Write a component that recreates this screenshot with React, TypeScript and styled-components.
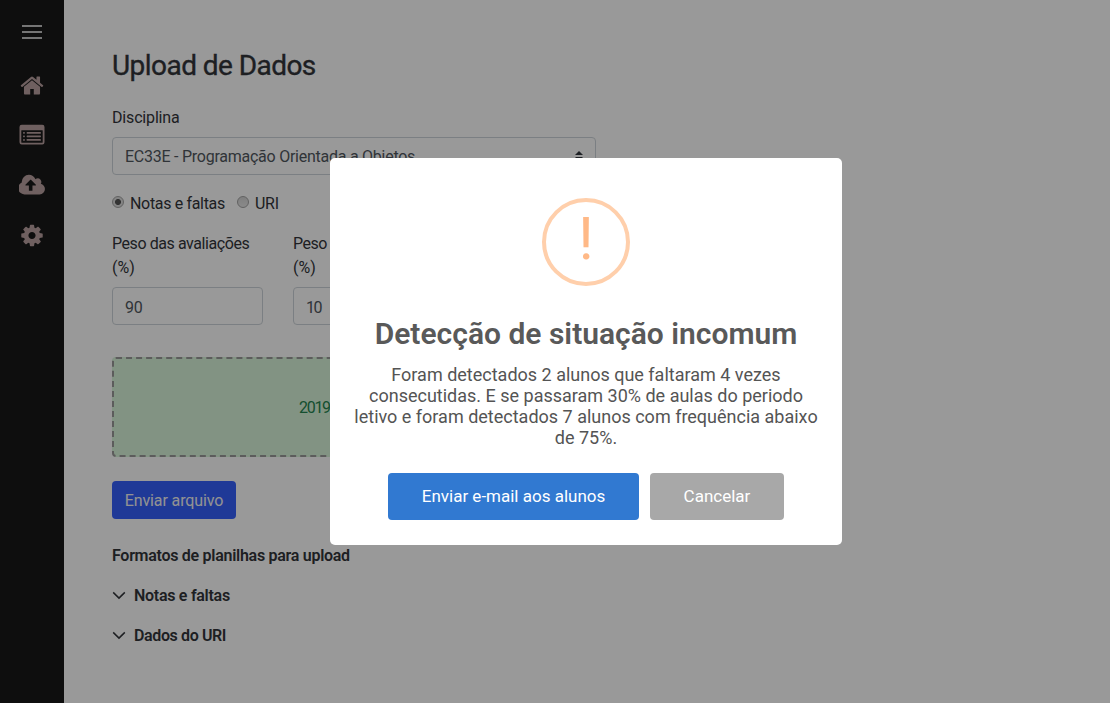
import React from "react";
import styled, { createGlobalStyle } from "styled-components";

const Global = createGlobalStyle`
  *, *::before, *::after { box-sizing: border-box; }
  html, body { margin: 0; padding: 0; overflow: hidden; }
  body { background: #fff; font-family: Roboto, "Liberation Sans", sans-serif; font-size: 16px; line-height: 24px; color: #32353a; }
`;

const Page = styled.div`
  display: flex;
  height: 703px;
  width: 1110px;
`;

const Sidebar = styled.nav`
  width: 64px;
  flex: none;
  background: #181818;
  color: #b9a0a0;
  display: flex;
  flex-direction: column;
  align-items: center;
  padding-top: 24px;
`;

const MenuButton = styled.div`
  width: 20px;
  height: 14px;
  margin: 1px 0 21px;
  display: flex;
  flex-direction: column;
  justify-content: space-between;
`;

const MenuBar = styled.span`
  height: 2px;
  background: #c4c4c4;
`;

const NavItem = styled.a`
  height: 50px;
  display: flex;
  align-items: center;
  justify-content: center;
`;

const Glyph = styled.svg`
  display: block;
  height: 25px;
  width: 26px;
  fill: currentColor;
`;

const Main = styled.main`
  padding: 49px 48px 0;
  width: 580px;
`;

const Title = styled.h1`
  margin: 0 0 23px;
  font-size: 28px;
  font-weight: 400;
  line-height: 34px;
  letter-spacing: -0.55px;
  -webkit-text-stroke: 0.35px currentColor;
`;

const Label = styled.label<{ $ls?: number }>`
  display: block;
  height: 24px;
  white-space: nowrap;
  letter-spacing: ${(p) => p.$ls ?? 0}px;
`;

const Control = styled.div<{ $w?: number; $ls?: number; $drop?: number }>`
  width: ${(p) => (p.$w ? `${p.$w}px` : "100%")};
  height: 38px;
  padding: ${(p) => p.$drop ?? 2}px 12px 0;
  border: 1px solid #ced4da;
  border-radius: 4px;
  display: flex;
  align-items: center;
  justify-content: space-between;
  color: #50575e;
  white-space: nowrap;
  letter-spacing: ${(p) => p.$ls ?? 0}px;
`;

const SelectArrows = styled.svg`
  width: 8px;
  height: 10px;
  margin-bottom: 2px;
  fill: #343a40;
`;

const Field = styled.div`
  display: flex;
  flex-direction: column;
  gap: 7px;
`;

const RadioRow = styled.div`
  display: flex;
  margin-top: 17px;
  gap: 12px;
`;

const RadioLabel = styled.label<{ $ls?: number }>`
  display: flex;
  align-items: center;
  gap: 6px;
  white-space: nowrap;
  letter-spacing: ${(p) => p.$ls ?? 0}px;
`;

const Radio = styled.span<{ $on?: boolean }>`
  width: 12px;
  height: 12px;
  margin-bottom: 4px;
  border-radius: 50%;
  border: 1px solid #a3a3a3;
  background: ${(p) =>
    p.$on ? "radial-gradient(circle, #555 0 2.6px, #dcdcdc 3.4px)" : "linear-gradient(#d4d4d4, #e6e6e6)"};
`;

const Weights = styled.div`
  display: flex;
  gap: 30px;
  margin-top: 16px;
`;

const DropZone = styled.div`
  margin-top: 32px;
  height: 100px;
  border: 2px dashed #9a9a9a;
  border-radius: 4px;
  background: #d9f5da;
  color: #23844f;
  display: flex;
  align-items: center;
  padding: 2px 0 0 185px;
  letter-spacing: -1.3px;
`;

const SubmitButton = styled.button`
  display: block;
  margin: 24px 0;
  width: 124px;
  height: 38px;
  padding: 2px 0 0;
  border: 0;
  border-radius: 4px;
  background: #3460fc;
  color: #f4f4f4;
  font: 16px/24px Roboto, sans-serif;
  white-space: nowrap;
  letter-spacing: -0.12px;
`;

const SectionTitle = styled.div<{ $ls?: number }>`
  height: 24px;
  margin-bottom: 16px;
  font-weight: 600;
  display: flex;
  align-items: center;
  gap: 8px;
  white-space: nowrap;
  letter-spacing: ${(p) => p.$ls ?? 0}px;
`;

const Sections = styled.div`
  padding-top: 1px;
`;

const Chevron = styled.svg`
  width: 14px;
  height: 14px;
  margin-bottom: 2px;
  fill: none;
  stroke: currentColor;
  stroke-width: 1.5;
`;

const Backdrop = styled.div`
  position: absolute;
  inset: 0;
  background: rgba(0, 0, 0, 0.4);
  display: flex;
  align-items: center;
  justify-content: center;
  padding-left: 62px;
`;

const Dialog = styled.section`
  width: 512px;
  height: 387px;
  padding: 40px 20px 20px;
  border-radius: 5px;
  background: #fff;
  display: flex;
  flex-direction: column;
  align-items: center;
  text-align: center;
`;

const WarningRing = styled.div`
  width: 88px;
  height: 88px;
  flex: none;
  border: 4px solid #ffcfab;
  border-radius: 50%;
  color: #ffb987;
  font-size: 60px;
  line-height: 74px;
`;

const DialogTitle = styled.h2`
  margin: 30px 0 13px;
  font-size: 30px;
  line-height: 35px;
  font-weight: 600;
  color: #595959;
  white-space: nowrap;
`;

const DialogText = styled.p`
  margin: 0;
  font-size: 18px;
  line-height: 21px;
  color: #545454;
  white-space: nowrap;
`;

const Actions = styled.div`
  display: flex;
  gap: 11px;
  margin-top: 25px;
`;

const ActionButton = styled.button<{ $bg: string; $w: number }>`
  width: ${(p) => p.$w}px;
  height: 47px;
  padding: 0 0 2px;
  border: 0;
  border-radius: 4px;
  background: ${(p) => p.$bg};
  color: #fff;
  font: 17px/20px Roboto, sans-serif;
`;

const HomeIcon = () => (
  <Glyph viewBox="0 0 1792 1792">
    <path d="M1472 992v480q0 26-19 45t-45 19h-384v-384h-256v384h-384q-26 0-45-19t-19-45v-480q0-1 .5-3t.5-3l575-474 575 474q1 2 1 6zm223-69l-62 74q-8 9-21 11h-3q-13 0-21-7l-692-577-692 577q-12 8-24 7-13-2-21-11l-62-74q-8-10-7-23.5t11-21.5l719-599q32-26 76-26t76 26l244 204v-195q0-14 9-23t23-9h192q14 0 23 9t9 23v408l219 182q10 8 11 21.500t-7 23.500z" />
  </Glyph>
);

const ListIcon = () => (
  <Glyph viewBox="0 0 1792 1792">
    <path
      fillRule="evenodd"
      d="M160 128h1472a160 160 0 0 1 160 160v1088a160 160 0 0 1-160 160H160a160 160 0 0 1-160-160V288a160 160 0 0 1 160-160zM128 544v832q0 32 32 32h1472q32 0 32-32V544q0-32-32-32H160q-32 0-32 32z"
    />
    {[640, 896, 1152].map((y) => (
      <g key={y}>
        <rect x="256" y={y} width="128" height="128" rx="32" />
        <rect x="512" y={y} width="1024" height="128" rx="32" />
      </g>
    ))}
  </Glyph>
);

const CloudIcon = () => (
  <Glyph viewBox="0 0 1856 1792">
    <path d="M1216 864q0-14-9-23l-352-352q-9-9-23-9t-23 9l-351 351q-10 12-10 24 0 14 9 23t23 9h224v352q0 13 9.5 22.5t22.5 9.500h192q13 0 22.500-9.500t9.500-22.500v-352h224q13 0 22.500-9.500t9.500-22.500zm640 288q0 159-112.500 271.500t-271.500 112.500h-1088q-185 0-316.500-131.500t-131.500-316.500q0-130 70-240t188-165q-2-30-2-43 0-212 150-362t362-150q156 0 285.500 87t188.500 231q71-62 166-62 106 0 181 75t75 181q0 76-41 138 130 31 213.500 135.500t83.500 238.500z" />
  </Glyph>
);

const CogIcon = () => (
  <Glyph viewBox="0 0 1792 1792">
    <path d="M1152 896q0-106-75-181t-181-75-181 75-75 181 75 181 181 75 181-75 75-181zm512-109v222q0 12-8 23t-20 13l-185 28q-19 54-39 91 35 50 107 138 10 12 10 25t-9 23q-27 37-99 108t-94 71q-12 0-26-9l-138-108q-44 23-91 38-16 136-29 186-7 28-36 28h-222q-14 0-24.500-8.500t-11.500-21.500l-28-184q-49-16-90-37l-141 107q-10 9-25 9-14 0-25-11-126-114-165-168-7-10-7-23 0-12 8-23 15-21 51-66.500t54-70.500q-27-50-41-99l-183-27q-13-2-21-12.500t-8-23.500v-222q0-12 8-23t19-13l186-28q14-46 39-92-40-57-107-138-10-12-10-24 0-10 9-23 26-36 98.500-107.500t94.500-71.500q13 0 26 10l138 107q44-23 91-38 16-136 29-186 7-28 36-28h222q14 0 24.500 8.500t11.500 21.500l28 184q49 16 90 37l142-107q9-9 24-9 13 0 25 10 129 119 165 170 7 8 7 22 0 12-8 23-15 21-51 66.500t-54 70.500q26 50 41 98l183 28q13 2 21 12.500t8 23.500z" />
  </Glyph>
);

const ChevronDown = () => (
  <Chevron viewBox="0 0 14 14">
    <path d="M1.2 4.400 7 10.100l5.800-5.700" />
  </Chevron>
);

export default function App() {
  return (
    <>
      <Global />
      <Page>
        <Sidebar>
          <MenuButton>
            <MenuBar />
            <MenuBar />
            <MenuBar />
          </MenuButton>
          <NavItem><HomeIcon /></NavItem>
          <NavItem><ListIcon /></NavItem>
          <NavItem><CloudIcon /></NavItem>
          <NavItem><CogIcon /></NavItem>
        </Sidebar>
        <Main>
          <Title>Upload de Dados</Title>
          <Field>
            <Label $ls={-0.17}>Disciplina</Label>
            <Control $ls={-0.25}>
              EC33E - Programação Orientada a Objetos
              <SelectArrows viewBox="0 0 8 10">
                <path d="M4 0l4 4H0zM0 6h8l-4 4z" />
              </SelectArrows>
            </Control>
          </Field>
          <RadioRow>
            <RadioLabel $ls={-0.33}><Radio $on />Notas e faltas</RadioLabel>
            <RadioLabel $ls={-0.2}><Radio />URI</RadioLabel>
          </RadioRow>
          <Weights>
            <Field>
              <div>
                <Label $ls={-0.43}>Peso das avaliações</Label>
                <Label>(%)</Label>
              </div>
              <Control $w={151} $ls={-0.3} $drop={4}>90</Control>
            </Field>
            <Field>
              <div>
                <Label $ls={-0.5}>Peso</Label>
                <Label>(%)</Label>
              </div>
              <Control $w={151} $ls={-1.6} $drop={4}>10</Control>
            </Field>
          </Weights>
          <DropZone>2019</DropZone>
          <SubmitButton>Enviar arquivo</SubmitButton>
          <Sections>
            <SectionTitle $ls={-0.28}>Formatos de planilhas para upload</SectionTitle>
            <SectionTitle $ls={-0.28}><ChevronDown />Notas e faltas</SectionTitle>
            <SectionTitle $ls={-0.38}><ChevronDown />Dados do URI</SectionTitle>
          </Sections>
        </Main>
      </Page>
      <Backdrop>
        <Dialog>
          <WarningRing>!</WarningRing>
          <DialogTitle>Detecção de situação incomum</DialogTitle>
          <DialogText>
            Foram detectados 2 alunos que faltaram 4 vezes
            <br />
            consecutidas. E se passaram 30% de aulas do periodo
            <br />
            letivo e foram detectados 7 alunos com frequência abaixo
            <br />
            de 75%.
          </DialogText>
          <Actions>
            <ActionButton $bg="#3179d1" $w={251}>Enviar e-mail aos alunos</ActionButton>
            <ActionButton $bg="#a8a8a8" $w={134}>Cancelar</ActionButton>
          </Actions>
        </Dialog>
      </Backdrop>
    </>
  );
}
